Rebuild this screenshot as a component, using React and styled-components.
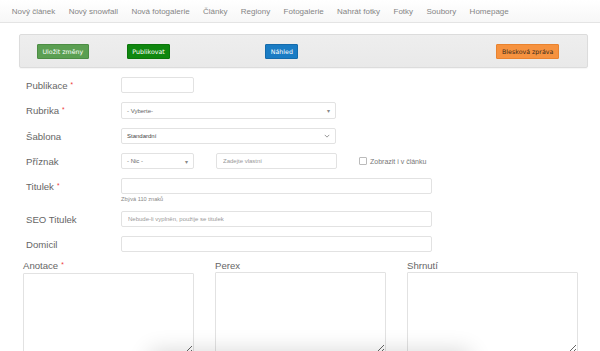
import styled, { createGlobalStyle } from "styled-components";

const GlobalStyle = createGlobalStyle`
  html, body {
    margin: 0;
    padding: 0;
    background: #fff;
    overflow: hidden;
  }
  body {
    font-family: "Liberation Sans", Arial, sans-serif;
  }
  * {
    box-sizing: border-box;
  }
`;

const navItems = [
  "Nový článek",
  "Nový snowfall",
  "Nová fotogalerie",
  "Články",
  "Regiony",
  "Fotogalerie",
  "Nahrát fotky",
  "Fotky",
  "Soubory",
  "Homepage",
];

const App = () => {
  return (
    <Page>
      <GlobalStyle />
      <Nav>
        {navItems.map((item) => (
          <NavLink key={item}>{item}</NavLink>
        ))}
      </Nav>

      <Toolbar>
        <ActionButton $color="#5b9f52" $border="#4c8d44" $offset={17}>
          Uložit změny
        </ActionButton>
        <ActionButton $color="#0f870f" $border="#0b760b" $offset={38}>
          Publikovat
        </ActionButton>
        <ActionButton $color="#1a7cc4" $border="#156bab" $offset={95}>
          Náhled
        </ActionButton>
        <ActionButton
          $color="#f6923f"
          $border="#e9832f"
          $text="#3a2a1a"
          $offset={198}
        >
          Blesková zpráva
        </ActionButton>
      </Toolbar>

      <Form>
        <Row>
          <Label>
            Publikace<Req>*</Req>
          </Label>
          <TextInput $w={73} />
        </Row>
        <Row>
          <Label>
            Rubrika<Req>*</Req>
          </Label>
          <SelectBox $w={215} $h={17}>
            <span>- Vyberte-</span>
            <Caret>▾</Caret>
          </SelectBox>
        </Row>
        <Row>
          <Label>Šablona</Label>
          <SelectBox $w={215} $dark>
            <span>Standardní</span>
            <Chevron viewBox="0 0 8 5">
              <path d="M1 1l3 3 3-3" fill="none" stroke="#777" strokeWidth="1" />
            </Chevron>
          </SelectBox>
        </Row>
        <Row>
          <Label>Příznak</Label>
          <SelectBox $w={73}>
            <span>- Nic -</span>
            <Caret>▾</Caret>
          </SelectBox>
          <TextInput $w={121} $ml={22} placeholder="Zadejte vlastní" />
          <CheckLabel>
            <CheckBox />
            Zobrazit i v článku
          </CheckLabel>
        </Row>
        <FieldGroup>
          <Row>
            <Label>
              Titulek<Req>*</Req>
            </Label>
            <TextInput $w={311} />
          </Row>
          <Help>Zbývá 110 znaků</Help>
        </FieldGroup>
        <Row>
          <Label>SEO Titulek</Label>
          <TextInput
            $w={311}
            placeholder="Nebude-li vyplněn, použije se titulek"
          />
        </Row>
        <Row>
          <Label>Domicil</Label>
          <TextInput $w={311} />
        </Row>
      </Form>

      <Columns>
        <Column>
          <ColLabel>
            Anotace<Req>*</Req>
          </ColLabel>
          <Area />
        </Column>
        <Column>
          <ColLabel>Perex</ColLabel>
          <Area />
        </Column>
        <Column>
          <ColLabel>Shrnutí</ColLabel>
          <Area />
        </Column>
      </Columns>

      <FloatingBar />
    </Page>
  );
};

const Page = styled.div`
  width: 600px;
  height: 351px;
  overflow: hidden;
  position: relative;
`;

const Nav = styled.nav`
  display: flex;
  align-items: center;
  height: 23px;
  padding-left: 5px;
  background: linear-gradient(#ffffff, #f7f7f7);
  border-bottom: 1px solid #e4e4e4;
`;

const NavLink = styled.a`
  font-size: 8px;
  color: #858585;
  padding: 0 6.7px;
  white-space: nowrap;
  cursor: pointer;
`;

const Toolbar = styled.div`
  display: flex;
  align-items: center;
  margin: 11px 0 0 19px;
  width: 569px;
  height: 34px;
  background: linear-gradient(#eeeeee, #e9e9e9);
  border: 1px solid #dcdcdc;
  border-radius: 2px;
  box-shadow: 0 1px 1px rgba(0, 0, 0, 0.04);
`;

const ActionButton = styled.button`
  margin-left: ${(p) => p.$offset}px;
  height: 15px;
  padding: 0 4.5px;
  font-family: "DejaVu Sans", Verdana, sans-serif;
  font-size: 6.3px;
  color: ${(p) => p.$text || "#fff"};
  background: ${(p) => p.$color};
  border: 1px solid ${(p) => p.$border};
  border-radius: 1px;
  white-space: nowrap;
  line-height: 13px;
`;

const Form = styled.div`
  display: flex;
  flex-direction: column;
  gap: 9px;
  padding: 9px 0 0 26px;
`;

const FieldGroup = styled.div`
  display: flex;
  flex-direction: column;
`;

const Row = styled.div`
  display: flex;
  align-items: center;
  min-height: 16px;
`;

const Label = styled.label`
  width: 95px;
  flex-shrink: 0;
  font-size: 9.6px;
  color: #666;
`;

const Req = styled.span`
  color: #e33;
  font-size: 6.5px;
  margin-left: 3px;
  position: relative;
  top: -2px;
`;

const TextInput = styled.input`
  width: ${(p) => p.$w}px;
  height: 16px;
  margin-left: ${(p) => p.$ml || 0}px;
  border: 1px solid #e2e2e2;
  border-radius: 2px;
  padding: 0 6px;
  font-family: "Liberation Sans", Arial, sans-serif;
  font-size: 6px;
  color: #555;
  background: #fff;
  outline: none;

  &::placeholder {
    color: #999;
  }
`;

const SelectBox = styled.div`
  width: ${(p) => p.$w}px;
  height: ${(p) => p.$h || 16}px;
  display: flex;
  align-items: center;
  justify-content: space-between;
  padding: 0 5px 0 5px;
  border: 1px solid #e2e2e2;
  border-radius: 2px;
  font-size: 6px;
  color: ${(p) => (p.$dark ? "#444" : "#666")};
  background: #fff;
`;

const Caret = styled.span`
  font-size: 6px;
  color: #888;
`;

const Chevron = styled.svg`
  width: 6px;
  height: 4px;
`;

const CheckLabel = styled.label`
  display: flex;
  align-items: center;
  margin-left: 22px;
  font-size: 7px;
  color: #777;
`;

const CheckBox = styled.span`
  width: 8px;
  height: 8px;
  border: 1px solid #bbb;
  border-radius: 1px;
  margin-right: 3px;
  background: #fff;
`;

const Help = styled.div`
  margin: 2px 0 0 95px;
  font-size: 5.6px;
  color: #888;
`;

const Columns = styled.div`
  display: grid;
  grid-template-columns: repeat(3, 171px);
  column-gap: 21px;
  padding: 9px 0 0 23px;
`;

const Column = styled.div`
  display: flex;
  flex-direction: column;
`;

const ColLabel = styled.label`
  font-size: 9.6px;
  color: #666;
  line-height: 10px;
  margin-bottom: 1px;
`;

const Area = styled.textarea`
  width: 171px;
  height: 82px;
  border: 1px solid #e2e2e2;
  border-radius: 1px;
  background: #fff;
  resize: both;
  outline: none;
`;

const FloatingBar = styled.div`
  position: fixed;
  left: 150px;
  bottom: -30px;
  width: 320px;
  height: 30px;
  background: #fff;
  box-shadow: 0 0 22px rgba(0, 0, 0, 0.16);
`;

export default App;
